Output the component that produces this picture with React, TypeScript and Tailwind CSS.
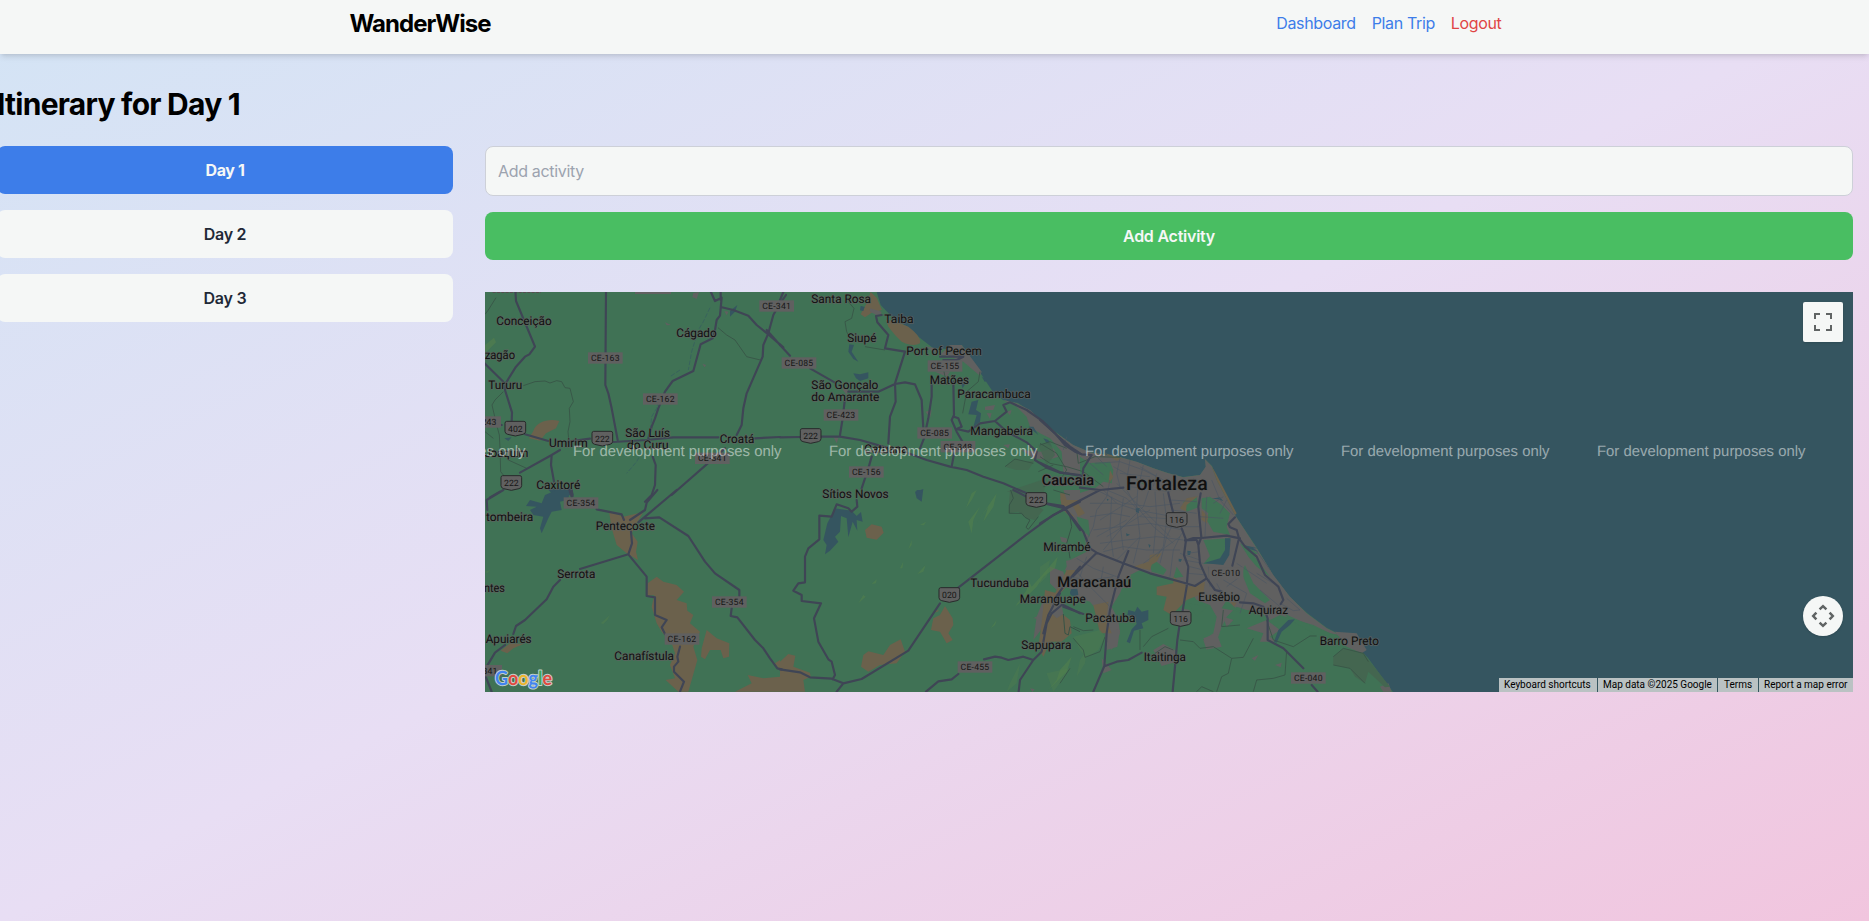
import React, { useState } from "react";

type Origin = [number, number];
type Label = [string, number, number, number];
type Badge = [string, number, number];

/* The map is drafted in sheets, each at three units per pixel. */
const A: Origin = [480, 285];
const B: Origin = [780, 285];
const C: Origin = [480, 490];
const D: Origin = [780, 490];
const E: Origin = [1040, 420];

function Sheet({ at, children }: { at: Origin; children: React.ReactNode }) {
  return <g transform={`translate(${at[0]} ${at[1]}) scale(0.33333)`}>{children}</g>;
}

/* name, left, right, baseline */
const towns: { at: Origin; labels: Label[] }[] = [
  {
    at: A,
    labels: [
      ["Conceição", 49, 215, 121],
      ["zagão", 14, 105, 223],
      ["Tururu", 25, 127, 312],
      ["Cágado", 589, 710, 156],
      ["São Luís", 436, 570, 456],
      ["do Curu", 441, 566, 491],
      ["Umirim", 207, 323, 486],
      ["Joaquim", 14, 145, 516],
      ["Croatá", 719, 823, 474],
      ["Caxitoré", 169, 301, 612],
    ],
  },
  {
    at: B,
    labels: [
      ["Santa Rosa", 94, 273, 55],
      ["Taiba", 313, 401, 114],
      ["Siupé", 202, 289, 171],
      ["Port of Pecem", 379, 606, 210],
      ["Matões", 449, 567, 297],
      ["São Gonçalo", 94, 295, 312],
      ["do Amarante", 94, 298, 348],
      ["Paracambuca", 532, 752, 339],
      ["Mangabeira", 571, 759, 450],
      ["Catuana", 253, 383, 504],
      ["Sítios Novos", 127, 326, 639],
    ],
  },
  {
    at: C,
    labels: [
      ["tombeira", 18, 160, 93],
      ["Pentecoste", 347, 525, 121],
      ["Serrota", 232, 346, 265],
      ["ntes", 12, 75, 306],
      ["Apuiarés", 17, 155, 459],
      ["Canafístula", 403, 582, 510],
    ],
  },
  {
    at: D,
    labels: [
      ["Tucunduba", 571, 747, 291],
      ["Maranguape", 719, 917, 339],
      ["Sapupara", 724, 874, 477],
    ],
  },
  {
    at: E,
    labels: [
      ["Mirambé", 10, 152, 393],
      ["Eusébio", 475, 600, 543],
      ["Aquiraz", 626, 744, 583],
      ["Pacatuba", 136, 286, 606],
      ["Itaitinga", 311, 438, 724],
      ["Barro Preto", 839, 1017, 676],
    ],
  },
];

const stateRoads: { at: Origin; badges: Badge[] }[] = [
  { at: A, badges: [["CE-163", 376, 219], ["CE-162", 541, 342], ["CE-341", 697, 520], ["243", 27, 411], ["CE-341", 890, 63], ["CE-085", 957, 234]] },
  { at: B, badges: [["CE-155", 495, 243], ["CE-423", 183, 390], ["CE-085", 464, 444], ["CE-348", 534, 485], ["CE-156", 259, 561]] },
  { at: C, badges: [["CE-354", 303, 39], ["CE-354", 748, 336], ["CE-162", 606, 447], ["341", 30, 542]] },
  { at: D, badges: [["CE-455", 585, 531]] },
  { at: E, badges: [["CE-010", 558, 459], ["CE-040", 805, 774]] },
];

const shields: { at: Origin; badges: Badge[] }[] = [
  { at: A, badges: [["402", 106, 430], ["222", 367, 460], ["222", 94, 593]] },
  { at: B, badges: [["222", 92, 452]] },
  { at: D, badges: [["222", 769, 29], ["020", 508, 314]] },
  { at: E, badges: [["116", 410, 299], ["116", 422, 596]] },
];

const watermarks = [317, 573, 829, 1085, 1341, 1597];

function TerrainMap() {
  return (
    <svg viewBox="485 292 1368 400" className="block h-full w-full" fontFamily="Roboto, 'Liberation Sans', sans-serif" textRendering="geometricPrecision">
      <rect x="485" y="292" width="1368" height="400" fill="#355560" />
      <path
        fill="#407255"
        d="M485 292H876.7L880.7 305L895 320L908 327L920 338L933 348L947 349L962 345L970 357L983 377L993 392L1003 400L1018 403L1033 413L1040 420L1057 433L1073 445L1090 452L1120 457L1137 462L1153 468L1168 473L1183 477L1200 475L1206 467L1205 459L1212 466L1217 480L1235 515L1257 548L1273 575L1290 597L1307 613L1327 628L1345 637L1353 642L1368 658L1390 688L1393 692H485Z"
      />

      {/* urban fabric and coast strip */}
      <Sheet at={E}>
        <g fill="#606060">
          <path d="M0 0L50 40L100 75L150 97L240 112L290 125L340 145L385 160L430 172L480 165L497 140L495 118L515 138L530 180L585 285L650 385L700 465L750 530L800 580L860 625L900 645L870 640L820 615L770 600L720 585L690 600L660 575L620 570L590 560L560 590L545 620L535 650L500 690L490 660L520 640L530 590L510 555L470 540L440 500L400 475L350 465L300 450L260 470L240 520L215 560L235 600L240 640L215 690L195 650L200 600L170 570L150 545L105 530L85 500L100 465L75 450L90 420L140 395L135 350L100 300L70 270L60 235L100 225L165 205L190 185L215 190L200 150L150 130L120 110L60 85L40 60L0 40L-30 20L-40 -10L-70 -40L-50 -35Z" />
          <path d="M200 620L240 630L232 680L200 690ZM420 565L450 570L440 590ZM490 655L530 640L545 680L505 688ZM635 715L655 705L645 722ZM705 735L725 728L722 742ZM550 590L580 600L560 622ZM340 690L370 672L405 690L410 725L365 738ZM185 715L215 750L190 760ZM620 625L680 600L720 630L690 650L710 665L660 665L670 640ZM885 635L950 640L980 690L965 700L920 680ZM-20 595L30 570L50 590L15 600ZM1020 800L1045 790L1055 815H1030Z" />
          <path d="M-55 90L0 95L40 85L55 110L25 120L-20 115ZM30 440L70 455L80 500L60 520L30 490ZM10 540L40 520L50 560L10 620L-20 660L-10 590Z" />
        </g>
        <g fill="#407255">
          <path d="M430 245L470 230L475 262L440 275ZM485 235L510 230L545 255L570 280L560 320L570 345L520 335L500 300L505 280L485 265ZM110 290L145 300L150 350L120 325ZM490 360L570 355L565 400L540 430L490 432L510 408ZM330 430L350 425L380 450L370 465L335 455ZM600 370L655 400L640 405L690 470L650 440L625 410ZM615 435L640 490L690 540L675 550L630 520L605 460ZM320 200L290 180L310 178ZM215 190L170 160L140 130L210 125L220 150ZM410 440L430 470L400 475ZM750 600L730 580L830 625L900 650L880 655L820 640ZM560 540L600 575L545 565ZM445 550L500 560L470 590Z" />
        </g>
        <g fill="#6b614c">
          <path d="M350 500L400 490L400 470L445 500L495 485L490 520L440 540L395 585L370 570L380 530L350 525ZM160 555L205 545L200 600L215 640L180 640ZM70 235L110 245L135 280L115 290L100 260L65 255ZM325 440L330 405L365 400L350 425ZM280 440L340 420L330 450ZM485 270L505 290L500 310L485 300ZM570 545L590 548L582 560ZM200 130L220 170L205 195L210 150ZM420 265L440 235L475 228L440 255L438 275ZM195 100L245 115L230 122Z" />
          <path d="M515 138L530 180L585 285L590 280L530 165Z" />
        </g>
        <g fill="#487852" opacity=".75">
          <path d="M100 650L180 630L195 650L175 690L140 712L120 690ZM0 440L30 420L20 470L0 490ZM120 720L140 690L135 730L110 770ZM20 760L90 745L70 775L40 815ZM-90 790L-60 730L-70 790L-100 815Z" />
        </g>
        <path fill="#446650" d="M880 710L910 685L970 700L1050 800L1035 802L985 755L975 790L945 770L930 745L880 735Z" />
        <g fill="#355560">
          <path d="M265 570L285 575L292 560L305 575L325 570L325 600L305 610L310 625L282 632L270 670L260 665L275 628L290 612L285 592L262 585ZM555 355L572 355L568 405L550 435L520 432L490 430L515 422L540 415L555 390ZM610 375L655 385L640 385L655 395L620 385ZM92 508L112 506L115 525L95 527ZM287 265L299 264L296 280L288 276ZM442 392L453 394L450 405L443 405ZM715 630L745 600L765 598L750 615L725 635L710 668L702 665ZM-35 20L-5 45L-20 20ZM10 55L25 60L35 80L20 70ZM258 340L270 344L260 349ZM325 372L332 376L328 384ZM416 416L426 418L422 426L416 424ZM200 236L206 238L203 244ZM515 236L540 232L550 244L535 238Z" />
        </g>
      </Sheet>

      <Sheet at={B}>
        <path fill="#6b614c" d="M272 21L290 38L306 75L275 83L255 97L242 88L260 55ZM318 105L345 108L385 125Q425 155 420 175Q400 187 365 170L345 150L325 125Z" />
        <path fill="#606060" d="M270 70L305 80L300 95L270 80ZM510 180L545 180L605 260L600 272L550 230L510 215L480 210ZM615 365L645 360L640 375L615 375ZM680 380L695 375L690 390ZM160 455L175 460L170 475ZM670 345L710 355L750 375L820 440L900 500V570L850 560L845 500L815 465L780 410L730 375ZM437 380L455 375L450 400ZM670 480L690 478L685 490ZM185 310L205 315L200 330ZM620 385L635 385L630 402ZM440 185L470 190L465 205ZM465 260L510 260L500 275Z" />
        <path fill="#355560" d="M575 350L595 345L588 375L603 385L600 410L580 425L590 390L565 388ZM220 265L240 268L265 262L265 280L240 288L228 280ZM208 178L222 180L215 200L225 215L235 230L220 222L205 200ZM242 62L254 66L250 78L240 76ZM605 275L620 285L615 292ZM405 620L430 612L425 650L410 640ZM540 285L560 290L548 310Z" />
        <path fill="#446650" d="M675 545L705 522L740 530L765 525L745 555L710 555ZM775 480L810 470L825 510L800 540ZM680 620L740 600L800 580L790 630Z" opacity=".8" />
      </Sheet>

      <Sheet at={A}>
        <path fill="#6b614c" d="M238 408C205 400 170 410 160 438L147 460L180 467L198 445L228 430Z" />
        <path fill="#606060" d="M465 10H573V27H465ZM640 24L657 21L650 42L637 36ZM733 78L745 80L740 91ZM667 236L678 240L674 247ZM555 112L573 120L560 121Z" />
        <path fill="#355560" d="M750 78L772 60L765 80L750 95ZM73 460L95 457L85 468ZM203 612L275 608L281 630H220Z" />
        <path fill="#4c7a50" d="M15 180L42 158L48 172L15 205Z" />
        <path stroke="#5a4650" strokeWidth="3" strokeDasharray="9 4" d="M38 22H183" />
      </Sheet>

      <Sheet at={C}>
        <g fill="#6b614c">
          <path d="M387 64L430 80L490 66L470 100L455 130L473 155L468 185L474 210L440 190L410 165L395 115ZM503 280L530 260L550 275L590 285L612 305L590 330L620 340L622 362L640 375L630 400L660 425L640 470L652 510L625 605H595L557 570L585 565L570 525L585 490L575 460L545 425L530 400L515 350L523 315L500 318ZM665 475L680 420L710 445L748 460L747 500L730 505L722 480L690 480L675 508L663 500ZM62 482L90 460L130 462L100 475L82 490ZM765 605L815 580L803 555L850 565L900 560V605ZM885 520L900 510V540Z" />
        </g>
        <path fill="#355560" d="M195 15L230 0H275L262 30L240 35L245 60L215 65L205 85L185 130L180 115L190 80L160 75L150 60L170 50L138 48L150 30L185 40Z" />
        <path fill="#4c7a50" d="M362 400L390 375L382 390L370 402ZM15 245L32 240L22 250Z" opacity=".7" />
      </Sheet>

      <Sheet at={D}>
        <g fill="#6b614c">
          <path d="M255 120L275 103L305 110L311 128L290 149L260 143ZM495 348L518 385L520 405L505 430L518 450L500 460L480 425L453 420L460 385L480 375ZM243 530L250 495L265 484L310 495L330 465L362 448L375 485L350 520L300 525L265 545ZM0 515L25 492L46 497L40 530L90 548L92 560L70 570L75 605H0ZM795 300L830 310L825 355L870 390L875 430L845 455L810 455L790 500L775 470L785 400ZM840 10L885 10L900 20L890 40L850 50L885 80L865 75L845 55ZM860 240L900 230L850 300L815 330ZM460 370L470 360L478 362Z" />
        </g>
        <g fill="#606060">
          <path d="M858 212L900 205V240H862ZM840 140L860 145L862 160L845 155ZM815 330L840 320L850 372L830 385L810 365ZM850 0H900V30H860ZM750 595L764 598L757 606Z" />
        </g>
        <path fill="#355560" d="M163 55L215 62L230 78L243 66L248 95L230 90L232 122L218 95L205 142L200 85L183 78L180 125L165 140L175 155L150 182L135 193L140 165L130 150L142 100L155 75ZM410 0H425L420 26L408 10ZM870 308A11 9 0 1 0 892 308A11 9 0 1 0 870 308Z" />
        <g fill="#52804c" opacity=".6">
          <path d="M565 95L600 50L580 90L575 130ZM590 0L575 30L558 54L575 10ZM650 10L640 50L610 95L625 50L590 100ZM385 178L395 150L395 165ZM412 252L437 225L430 245ZM235 340L250 315L257 320ZM705 350L740 300L745 270L755 290L800 240L833 200L825 235L790 260L770 290L730 330ZM632 415L650 390L645 405ZM805 600L830 570L840 540L875 500L860 545L830 575ZM275 282L290 268L288 280ZM420 105L438 95L432 106ZM360 235L370 215L367 235Z" />
        </g>
        <path fill="#446650" d="M690 0L740 20L790 60L765 90L740 85L715 65L685 70Z" />
      </Sheet>

      {/* administrative outlines and local streams */}
      <g fill="none" stroke="#375346" strokeLinejoin="round">
        <Sheet at={A}>
          <path strokeWidth="2.5" d="M15 88L25 75L48 38M130 302L165 290L195 288L210 294L230 287L245 290L255 308L270 310L280 350L268 370L270 410L264 440L266 462M70 320L45 345L36 360L50 420L58 450L60 490L62 560L78 580L110 605M15 440L40 460M714 128L740 150L765 165L800 215L845 226M85 525L140 550" />
          <path strokeWidth="2" stroke="#355b60" d="M690 68L670 110L655 135L635 200L625 255M600 255L570 275M540 330L530 370L515 395L510 450M486 500L470 530L440 565" strokeDasharray="14 5" />
        </Sheet>
        <Sheet at={B}>
          <path strokeWidth="2.5" d="M205 50L222 70L215 100L195 110L200 140L215 170M255 185L315 195M600 260L595 290L560 320L548 385M780 480L810 470L860 490M675 545L705 522L760 535M775 560L820 540M490 250L500 300" />
        </Sheet>
        <Sheet at={D}>
          <path strokeWidth="3" d="M692 0L700 25L688 45L688 70L725 70L735 82L750 90L738 112L745 118L775 80M850 372L855 430L865 435L870 410L900 425M860 160L875 110L870 80M865 170L870 205" />
        </Sheet>
        <Sheet at={E}>
          <path strokeWidth="2.5" d="M0 70L50 100L80 150L60 180L10 200M0 110L30 130L80 140L130 155L190 200M40 210L90 225M110 90L115 130L165 110L240 112M100 620L130 632L160 630M100 655L130 690L135 712L180 695L195 650M300 630L300 690M310 680L335 650L385 625M420 660L460 665L480 685L520 680L575 715L610 712L640 655M575 715L565 760L545 770L530 815M550 570L545 620L600 615M680 600L700 660L760 680L810 648L830 648M740 690L735 765L700 775L650 780L640 815M470 815L485 800L520 815M880 710L910 685L970 700L985 725M880 735L930 745L975 790M345 700L375 680L400 690M90 745L60 790" />
        </Sheet>
      </g>

      {/* city streets */}
      <Sheet at={E}>
        <g fill="none" stroke="#4b5663" strokeWidth="2.2" strokeOpacity=".85">
          <path d="M165 130L240 125L310 150L380 185L480 190M240 115L230 160L240 200M270 120L260 180M310 135L300 180M210 180L200 230L170 270L160 320L140 360M180 215L250 250L330 260L420 250M190 210L230 250L290 270L400 290M200 210L260 235L290 265M295 180L290 260L300 350L280 430M330 200L310 260L240 330L190 390M260 210L290 260L340 320L400 370M150 250L230 250M150 290L220 280L270 290M160 330L240 320L330 310L430 330M180 370L260 360L350 350L430 360M190 395L250 380L320 390L420 390M250 235L240 310L250 390M215 230L210 330L220 410M345 215L350 290L340 400M370 220L380 300L370 380L350 410M400 310L380 350L360 430M390 240L470 245M395 270L470 280M410 320L480 320M425 340L400 390L390 470M440 365L480 360M440 400L480 395M430 420L490 430M450 440L490 450M445 460L500 465M110 415L160 445L230 470M80 470L150 480L220 470M105 450L150 500L190 540L210 560M140 410L120 470M190 440L180 500M150 130L190 165M170 110L200 140M480 290L550 295M500 230L495 350M520 250L550 230M560 240L540 280M505 440L510 500M550 480L620 520L600 580M600 470L560 500M590 430L680 490M60 60L120 100M80 50L70 90M700 490L650 460M530 490L560 545M660 510L720 560M740 535L780 570L760 572L720 550M640 380L690 450M515 180L540 240L580 285" />
          <path d="M300 140L420 210M220 140L340 205M270 200L390 215M240 160L330 170M350 160L340 200M400 175L390 215M440 180L435 210M460 175L500 210M230 190L390 350M180 300L290 230M200 350L330 270M170 350L260 300M230 420L300 350M310 430L420 350M300 290L430 300M420 400L480 420" strokeWidth="2" />
        </g>
      </Sheet>

      {/* highways */}
      <g fill="none" stroke="#3f4555" strokeLinejoin="round" strokeLinecap="round" strokeWidth="6.5">
        <Sheet at={A}>
          <path d="M106 15L108 48L165 185L148 208L135 215L108 245L77 295L75 315L96 382L95 410M0 222L70 290M15 408L65 420M135 448L205 468M378 15L376 300L385 325L395 370L413 465M265 470L330 461M400 471L500 465L580 457L715 457M825 460L900 456M240 495L215 510L120 563M215 510L213 540L222 590M60 620L30 637M690 15L705 48L725 38L720 92L710 105L705 135L698 160L662 178L640 258L578 288L555 320L535 370L525 400L515 425L505 460M722 15V45M722 66L760 75L805 92L830 120L865 148L910 187M918 30L895 63L880 90L865 145L850 180L848 215L800 325L790 370L785 420L770 450M518 515L527 540L525 600L515 630L495 650M735 490L575 630M860 135L900 180M268 615L275 635" />
        </Sheet>
        <Sheet at={B}>
          <path d="M10 21L0 45M0 180L30 212M90 250L165 293M305 90L288 93L292 112L325 150L315 190L375 200L345 295L347 350L330 395L325 475M205 320L295 320L345 297L375 292L405 298L425 345L430 430M195 340L188 400L180 450M0 457L60 456M122 455L180 455L240 465L320 488M385 505L440 525L510 545L560 555L610 575L670 595L740 625M455 300L455 335L445 400L432 460L420 490M520 290L522 390L515 405L530 440L550 475L525 490L515 545M522 395L535 400L545 425L530 432L565 440L600 415L645 408L680 380L670 360L690 352M645 408L680 440L740 472L770 500L765 525L800 548L840 563L900 570M690 352L740 375L790 410L830 450L870 485L900 505M275 515L265 550L245 610M480 215L550 215L530 225L490 225" />
        </Sheet>
        <Sheet at={C}>
          <path d="M70 0L20 30L22 60M275 0L278 18M350 58L425 73L432 90M532 0L500 38L495 60L450 90M590 0L475 97M495 85L538 82L625 138L675 215L705 250L778 300L778 318M755 355L752 378L772 382L825 450L850 475L870 505L892 535L905 538M453 125L456 160L445 193L500 260L500 318L525 322L525 375L560 390L545 412L555 432M600 470L592 500L595 515L582 530L582 545L612 575L600 605M445 193L300 237M240 270L220 290L200 328L135 390L108 408L100 432M75 465L45 488L20 530M15 555L35 605" />
        </Sheet>
        <Sheet at={D}>
          <path d="M230 30L232 50L215 65L205 55L170 43L155 80L118 77L118 148L85 175L75 200L75 277L55 280L40 302L65 315L65 333L123 340L102 385L115 455L145 508L155 515L165 555L158 568M0 538L60 547L90 562L155 566L190 580L245 567L385 482L480 340M535 293L735 137L820 75L900 35M170 605L190 580M438 605L475 574L515 568L535 552M612 508L645 500L665 503L685 510L730 500L760 510L785 485L800 400L815 370L845 345M760 510L740 540L720 570L716 605M700 0L740 20M798 40L850 48L900 120M900 230L850 290L825 325M850 345L900 370" />
        </Sheet>
        <Sheet at={E}>
          <path d="M0 0L45 40L75 75L105 95L125 103L155 105L130 145L128 165M0 128L60 157L125 168M120 203L180 210L250 203M180 210L75 265L0 310M20 252L75 265L130 335L150 385L170 398L250 430L330 460L445 492L465 498L500 475L480 430L475 375L470 360L435 360M170 398L100 468M60 520L25 585L10 640M70 560L130 582M265 393L235 470L210 570L200 640L193 738L160 815M195 738L230 725L265 720L305 698M385 218L390 240L400 280M425 325L438 360L432 405L445 440L440 500L428 572M418 620L412 660L405 740L398 815M482 220L475 260L484 352L475 375M435 362L460 354L484 354L560 347L600 355M585 292L565 312L570 322L590 330L597 355L577 437M597 355L615 380L650 410L675 465L715 500L730 540L722 552M500 475L525 510L545 515M600 547L640 550L670 560L683 595L683 660L730 685L790 745M815 795L833 815" />
        </Sheet>
      </g>

      {/* state road plates */}
      {stateRoads.map(({ at, badges }, i) => (
        <Sheet key={i} at={at}>
          {badges.map(([name, x, y]) => {
            const w = name.length > 3 ? 104 : 72;
            return (
              <g key={name + x}>
                <rect x={x - w / 2} y={y - 17} width={w} height="34" fill="#606060" />
                <text x={x} y={y + 9.5} fontSize="26" textAnchor="middle" fill="#161616" letterSpacing="0.6">
                  {name}
                </text>
              </g>
            );
          })}
        </Sheet>
      ))}

      {/* federal road shields */}
      {shields.map(({ at, badges }, i) => (
        <Sheet key={i} at={at}>
          {badges.map(([name, x, y]) => (
            <g key={name + x} transform={`translate(${x} ${y})`}>
              <path d="M-26 -21H26Q31 -21 31 -15V9Q31 16 23 18L0 23L-23 18Q-31 16 -31 9V-15Q-31 -21 -26 -21Z" fill="#606060" stroke="#282a2b" strokeWidth="3" />
              <text y="10" fontSize="26" textAnchor="middle" fill="#161616">
                {name}
              </text>
            </g>
          ))}
        </Sheet>
      ))}

      {/* town names */}
      {towns.map(({ at, labels }, i) => (
        <Sheet key={i} at={at}>
          <g fontSize="36" fill="#101010" stroke="#5e615f" strokeWidth="5" strokeOpacity=".8" strokeLinejoin="round" paintOrder="stroke">
            {labels.map(([name, x1, x2, y]) => (
              <text key={name} x={x1} y={y} textLength={x2 - x1} lengthAdjust="spacingAndGlyphs">
                {name}
              </text>
            ))}
          </g>
        </Sheet>
      ))}
      <Sheet at={E}>
        <g fill="#101010" stroke="#5e5f5f" strokeWidth="6" strokeLinejoin="round" paintOrder="stroke" fontWeight="500">
          <text x="5" y="196" fontSize="44" textLength="157" lengthAdjust="spacingAndGlyphs">Caucaia</text>
          <text x="52" y="502" fontSize="44" textLength="222" lengthAdjust="spacingAndGlyphs">Maracanaú</text>
          <text x="258" y="209" fontSize="58" textLength="245" lengthAdjust="spacingAndGlyphs">Fortaleza</text>
        </g>
      </Sheet>

      <g fill="#ffffff" fillOpacity=".5" fontFamily="'Liberation Sans', Arial, sans-serif" fontSize="15">
        {watermarks.map((x) => (
          <text key={x} x={x} y="456.3" textLength="208.5" lengthAdjust="spacingAndGlyphs">
            For development purposes only
          </text>
        ))}
      </g>

      <text x="495" y="685" fontSize="19.5" fontFamily="Lato, sans-serif" fontWeight="700" textLength="57" lengthAdjust="spacingAndGlyphs" stroke="#c3d0cb" strokeWidth="2" strokeLinejoin="round" paintOrder="stroke">
        <tspan fill="#4284f0">G</tspan>
        <tspan fill="#e04a3f">o</tspan>
        <tspan fill="#eeb52c">o</tspan>
        <tspan fill="#4284f0">g</tspan>
        <tspan fill="#3fa657">l</tspan>
        <tspan fill="#e04a3f">e</tspan>
      </text>
    </svg>
  );
}

export default function App() {
  const [day, setDay] = useState(1);
  return (
    <div className="h-[921px] w-full overflow-hidden bg-[linear-gradient(to_bottom_right,#d3e4f5,#e8def4,#f1c5de)] font-[Inter,'Liberation_Sans',sans-serif] text-black">
      <header className="relative h-[54px] bg-[#f5f7f6] shadow-md">
        <div className="mx-auto flex w-[1152px] -translate-x-[9px] items-center justify-between pt-2">
          <div className="pt-0.5 text-2xl leading-7 font-bold tracking-[-0.04em]">WanderWise</div>
          <nav className="flex gap-4 text-base leading-7 tracking-[-0.022em]">
            <a className="text-[#3d7de9]">Dashboard</a>
            <a className="text-[#3d7de9]">Plan Trip</a>
            <a className="text-[#e04444]">Logout</a>
          </nav>
        </div>
      </header>

      <main className="-ml-[3px] w-[1856px] pt-8">
        <h1 className="mb-6 text-3xl leading-9 font-bold tracking-[-0.025em]">Itinerary for Day {day}</h1>
        <div className="flex gap-8">
          <div className="flex w-[456px] flex-col gap-4">
            {[1, 2, 3].map((n) => (
              <button
                key={n}
                onClick={() => setDay(n)}
                className={
                  n === day
                    ? "h-12 rounded-lg bg-[#3d7de9] font-bold tracking-[-0.025em] text-[#f5f7f6]"
                    : "h-12 rounded-lg bg-[#f5f7f6] font-semibold tracking-[-0.015em] text-[#1f2937]"
                }
              >
                Day {n}
              </button>
            ))}
          </div>

          <div className="flex w-[1368px] flex-col">
            <input
              placeholder="Add activity"
              className="h-[50px] w-full rounded-lg border border-[#cdd0d8] bg-[#f5f7f6] px-3 tracking-[-0.02em] placeholder:text-[#9ca3af]"
            />
            <button className="mt-4 h-12 rounded-lg bg-[#49be62] font-semibold tracking-[-0.015em] text-[#f5f7f6]">Add Activity</button>

            <div className="relative mt-8 h-[400px] overflow-hidden">
              <TerrainMap />
              <button className="absolute top-[10px] right-[10px] flex size-10 items-center justify-center rounded-[2px] bg-[#f5f7f6] shadow">
                <svg viewBox="0 0 18 18" className="size-[18px]" fill="#606464">
                  <path d="M0 0v6h2V2h4V0H0zm16 0h-4v2h4v4h2V0h-2zm0 16h-4v2h6v-6h-2v4zM2 12H0v6h6v-2H2v-4z" />
                </svg>
              </button>
              <button className="absolute right-[10px] bottom-[56px] flex size-10 items-center justify-center rounded-full bg-[#f5f7f6] shadow">
                <svg viewBox="0 0 24 24" className="size-6" fill="none" stroke="#606464" strokeWidth="2.5">
                  <path d="M8.6 5.4L12 2.2L15.4 5.4M8.6 18.6L12 21.8L15.4 18.6M5.4 8.6L2.2 12L5.4 15.4M18.6 8.6L21.8 12L18.6 15.4" />
                </svg>
              </button>
              <div className="absolute right-0 bottom-0 flex h-[14px] gap-px font-[Roboto,sans-serif] text-[10px] leading-[14px] whitespace-nowrap text-black">
                <span className="w-[98px] bg-[#bac2c3] pl-[5px]">Keyboard shortcuts</span>
                <span className="w-[119px] bg-[#bac2c3] pl-[5px]">Map data ©2025 Google</span>
                <span className="w-[40px] bg-[#bac2c3] pl-[6px]">Terms</span>
                <span className="w-[94px] bg-[#bac2c3] pl-[5px]">Report a map error</span>
              </div>
            </div>
          </div>
        </div>
      </main>
    </div>
  );
}
